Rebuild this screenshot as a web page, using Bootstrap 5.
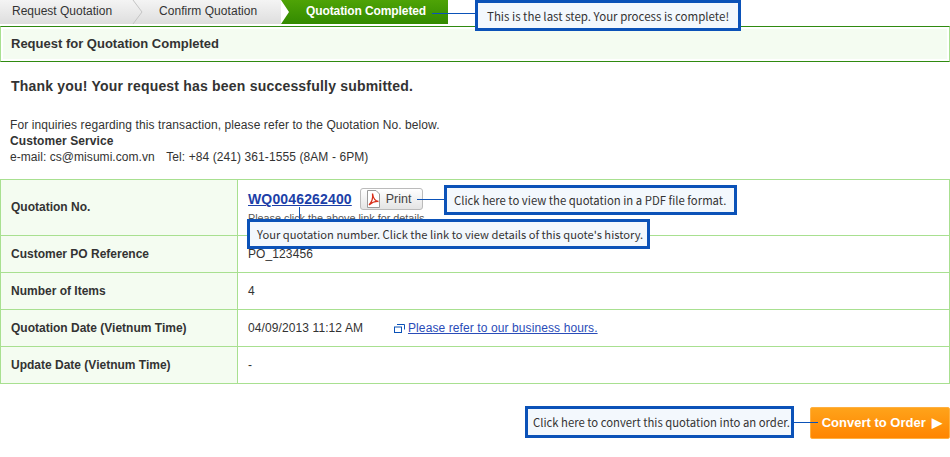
<!DOCTYPE html>
<html lang="en">
<head>
  <meta charset="UTF-8" />
  <meta name="viewport" content="width=device-width, initial-scale=1" />
  <title>Quotation Completed</title>
  <link href="https://cdn.jsdelivr.net/npm/bootstrap@5.3.0/dist/css/bootstrap.min.css" rel="stylesheet" />
  <style>
    body {
      font-family: "Liberation Sans", Arial, sans-serif;
      font-size: 12px;
      line-height: 16px;
      color: #333;
      background: #fff;
    }
    .page-wrap { position: relative; width: 950px; height: 457px; overflow: hidden; }

    /* Steps */
    .step-bar { height: 24px; width: 448px; }
    .step-item {
      height: 24px;
      line-height: 23px;
      background: linear-gradient(#f4f4f4, #dedede);
      position: relative;
    }
    .step-one { width: 146px; padding-left: 12px; }
    .step-two { width: 135px; padding-left: 13px; letter-spacing: .05px; }
    .step-now {
      width: 167px;
      padding-left: 25px;
      color: #fff;
      font-weight: 700;
      letter-spacing: -.1px;
      background: linear-gradient(#4ea306, #338a00);
      clip-path: polygon(0 0, 100% 0, 100% 100%, 0 100%, 8px 50%);
    }
    .step-two-edge { position: absolute; top: 0; right: 0; width: 14px; height: 24px; }

    /* Heading */
    .head-box {
      margin-top: 2px;
      height: 36px;
      background: #f4fcf1;
      border: 1px solid #a8e090;
      border-top-color: #2f8a10;
      border-bottom-color: #2f8a10;
      box-shadow: inset 0 0 0 2px #fff;
      padding-left: 10px;
      line-height: 34px;
      font-weight: 700;
      font-size: 13px;
    }
    .thanks {
      font-size: 14px;
      font-weight: 700;
      letter-spacing: .2px;
      line-height: 18px;
      margin: 15px 0 0 11px;
    }
    .inquiry { margin: 22px 0 0 10px; line-height: 16px; letter-spacing: .09px; }
    .mail-text { letter-spacing: .05px; }
    .tel-gap { margin-left: 8px; }

    /* Table */
    .quote-table { margin: 14px 0 0; width: 950px; border-color: #a8e090; table-layout: fixed; }
    .quote-table th, .quote-table td {
      padding: 0 10px;
      border: 1px solid #a8e090;
      height: 37px;
      font-size: 12px;
      color: #333;
      vertical-align: middle;
      box-shadow: none;
      background: #fff;
    }
    .quote-table td { letter-spacing: .1px; }
    .quote-table th { width: 237px; background: #f4fcf1; font-weight: 700; }
    .quote-table .row-first { height: 56px; padding-bottom: 2px; }
    .quote-table .cell-first { vertical-align: top; padding-top: 8px; }
    .quote-link { font-size: 14px; font-weight: 700; color: #1c3fa8; letter-spacing: .15px; text-decoration-thickness: 1px; }
    .biz-link { color: #2a4cb8; }
    .note-small { font-size: 10.800px; line-height: 13px; color: #555; margin-top: 2px; letter-spacing: 0; }
    .print-btn {
      display: inline-flex;
      align-items: center;
      gap: 5px;
      height: 22px;
      width: 63px;
      padding: 0 0 0 5px;
      font-size: 12.500px;
      color: #444;
      border: 1px solid #bbb;
      border-radius: 3px;
      background: linear-gradient(#fff, #e4e4e4);
    }
    .date-gap { margin-right: 27px; }

    /* Order button */
    .order-row { margin-top: 23px; }
    .order-btn {
      width: 140px;
      height: 32px;
      padding: 0 0 0 4px;
      font-size: 13px;
      font-weight: 700;
      color: #fff;
      border: 1px solid #ffb040;
      border-radius: 2px;
      background: linear-gradient(#ffa31a, #ff8500);
    }
    .order-arrow { font-size: 13px; margin-left: 3px; }

    /* Callouts laid over the page */
    .note-tip {
      position: absolute;
      display: flex;
      align-items: center;
      font-family: "Noto Sans CJK JP", "DejaVu Sans", sans-serif;
      color: #333;
      background: #f3f8fd;
      border: 3px solid #0b52b8;
      white-space: nowrap;
    }
    .tip-last { left: 475px; top: 0; width: 266px; height: 31px; padding-left: 9px; font-size: 11.500px; }
    .tip-pdf { left: 444px; top: 185px; width: 293px; height: 30px; padding: 0 0 1px 7px; font-size: 11.330px; }
    .tip-number { left: 247px; top: 219px; width: 403px; height: 30px; padding-left: 7px; font-size: 11.160px; }
    .tip-order { left: 525px; top: 406px; width: 269px; height: 32px; padding-left: 5px; font-size: 11.300px; }
    .tip-line { position: absolute; background: #0b52b8; }
    .line-a { left: 432px; top: 13px; width: 43px; height: 1px; }
    .line-b { left: 417px; top: 199px; width: 27px; height: 1px; }
    .line-c { left: 299px; top: 207px; width: 1px; height: 12px; }
    .line-d { left: 794px; top: 422px; width: 24px; height: 1px; }
  </style>
</head>
<body>
  <div class="page-wrap">

    <!-- Steps -->
    <div class="step-bar d-flex">
      <div class="step-item step-one">Request Quotation
        <svg class="step-two-edge" viewBox="0 0 14 24"><path d="M1 0 L10 12 L1 24" fill="none" stroke="#c4c4c4" /></svg>
      </div>
      <div class="step-item step-two">Confirm Quotation</div>
      <div class="step-item step-now">Quotation Completed</div>
    </div>

    <!-- Heading -->
    <div class="head-box">Request for Quotation Completed</div>

    <p class="thanks">Thank you! Your request has been successfully submitted.</p>
    <p class="inquiry mb-0">
      For inquiries regarding this transaction, please refer to the Quotation No. below.<br />
      <strong>Customer Service</strong><br />
      <span class="mail-text">e-mail: cs@misumi.com.vn</span> <span class="tel-gap">Tel: +84 (241) 361-1555 (8AM - 6PM)</span>
    </p>

    <!-- Details -->
    <table class="table quote-table">
      <tbody>
        <tr>
          <th class="row-first" scope="row">Quotation No.</th>
          <td class="cell-first">
            <div class="d-flex align-items-center gap-2">
              <a href="#" class="quote-link">WQ0046262400</a>
              <button type="button" class="print-btn">
                <svg width="15" height="18" viewBox="0 0 15 18"><path d="M1.500 .5H10L13.500 4V17.500H1.500Z" fill="#fff" stroke="#999" /><path d="M3 15C6 12 7 7 6.500 3.500C7 7 9 11 12.500 11.500C9 11 6 12.500 3 15Z" fill="none" stroke="#d8311c" stroke-width="1.300" /></svg>
                Print
              </button>
            </div>
            <div class="note-small">Please click the above link for details.</div>
          </td>
        </tr>
        <tr>
          <th scope="row">Customer PO Reference</th>
          <td>PO_123456</td>
        </tr>
        <tr>
          <th scope="row">Number of Items</th>
          <td>4</td>
        </tr>
        <tr>
          <th scope="row">Quotation Date (Vietnum Time)</th>
          <td>
            <span class="date-gap">04/09/2013 11:12 AM</span>
            <svg width="11" height="9" viewBox="0 0 11 9"><rect x=".5" y="3" width="7" height="5.500" fill="none" stroke="#0b52b8" /><path d="M3 .5H10.500V5.500" fill="none" stroke="#0b52b8" /></svg>
            <a href="#" class="biz-link">Please refer to our business hours.</a>
          </td>
        </tr>
        <tr>
          <th scope="row">Update Date (Vietnum Time)</th>
          <td>-</td>
        </tr>
      </tbody>
    </table>

    <div class="order-row d-flex justify-content-end">
      <button type="button" class="order-btn">Convert to Order <span class="order-arrow">&#9654;</span></button>
    </div>

    <!-- Callouts -->
    <span class="tip-line line-a"></span>
    <span class="tip-line line-b"></span>
    <span class="tip-line line-c"></span>
    <span class="tip-line line-d"></span>
    <div class="note-tip tip-last">This is the last step. Your process is complete!</div>
    <div class="note-tip tip-pdf">Click here to view the quotation in a PDF file format.</div>
    <div class="note-tip tip-number">Your quotation number. Click the link to view details of this quote's history.</div>
    <div class="note-tip tip-order">Click here to convert this quotation into an order.</div>
  </div>

  <script src="https://cdn.jsdelivr.net/npm/bootstrap@5.3.0/dist/js/bootstrap.bundle.min.js"></script>
</body>
</html>
